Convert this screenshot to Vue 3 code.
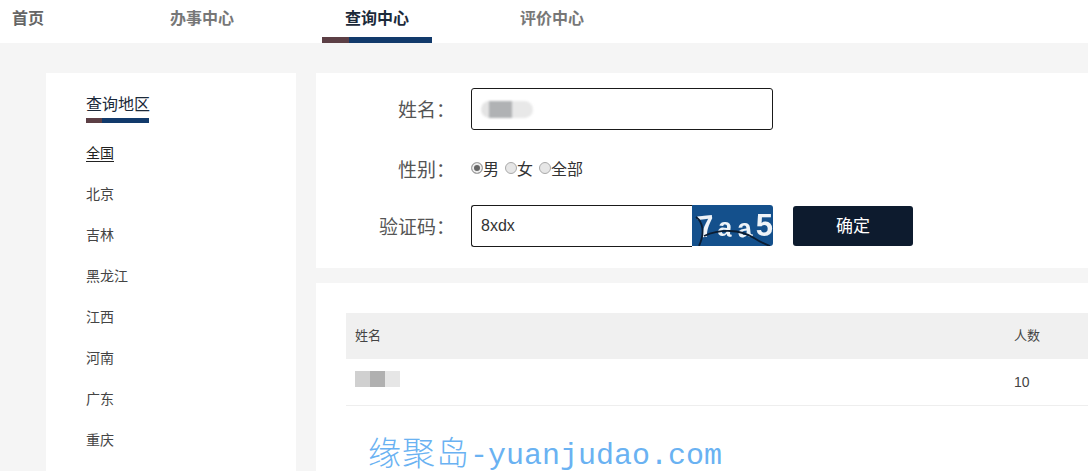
<script setup>
const navItems = ['办事中心', '查询中心', '评价中心']
const areas = ['全国', '北京', '吉林', '黑龙江', '江西', '河南', '广东', '重庆', '四川']
const genders = [
  { label: '男', checked: true },
  { label: '女', checked: false },
  { label: '全部', checked: false },
]
</script>

<template>
  <div class="page">
    <header class="nav">
      <a class="home">首页</a>
      <a v-for="item in navItems" :key="item" class="nav-item" :class="{ active: item === '查询中心' }">
        {{ item }}
        <span v-if="item === '查询中心'" class="bar"></span>
      </a>
    </header>

    <div class="content">
      <aside class="side">
        <div class="side-title">查询地区<span class="bar"></span></div>
        <ul class="areas">
          <li v-for="(area, i) in areas" :key="area"><span :class="{ current: i === 0 }">{{ area }}</span></li>
        </ul>
      </aside>

      <main class="main">
        <section class="form">
          <div class="row first">
            <label>姓名：</label>
            <div class="input name-input"><span class="blur-name"></span></div>
          </div>
          <div class="row second">
            <label>性别：</label>
            <div class="radios">
              <span v-for="g in genders" :key="g.label" class="radio-item">
                <i class="radio" :class="{ on: g.checked }"></i>{{ g.label }}
              </span>
            </div>
          </div>
          <div class="row third">
            <label>验证码：</label>
            <div class="captcha-wrap">
              <div class="input code-input">8xdx</div>
              <div class="captcha">
                <span class="cap-text"><b class="c1">7</b><b class="c2">a</b><b class="c3">a</b><b class="c4">5</b></span>
                <svg width="81" height="41" viewBox="0 0 81 41">
                  <path d="M4 12 C11 17 13 28 7 41 M12 31 C28 24 48 24 62 33 C68 37 73 39 78 41" fill="none" stroke="#0b1d33" stroke-width="1.8" />
                </svg>
              </div>
            </div>
            <button class="ok">确定</button>
          </div>
        </section>

        <section class="result">
          <div class="tr th"><span>姓名</span><span>人数</span></div>
          <div class="tr td"><span><i class="blur-cell"></i></span><span>10</span></div>
        </section>
      </main>
    </div>

    <div class="watermark"><span class="wm-cjk">缘聚岛</span>-yuanjudao.com</div>
  </div>
</template>

<style>
body {
  margin: 0;
}
</style>

<style scoped>
.page {
  position: relative;
  height: 471px;
  overflow: hidden;
  background: #f5f5f5;
  font-family: "Noto Sans CJK SC", "Liberation Sans", sans-serif;
  color: #333;
}
.nav {
  display: flex;
  height: 43px;
  background: #fff;
}
.home {
  width: 147px;
  padding-left: 12px;
  box-sizing: border-box;
  line-height: 35px;
  font-size: 16px;
  font-weight: 700;
  color: #666;
}
.nav-item {
  width: 110px;
  height: 37px;
  margin-right: 65px;
  text-align: center;
  line-height: 35px;
  font-size: 16px;
  font-weight: 700;
  color: #777;
}
.nav-item.active {
  color: #1c2a3a;
}
.bar {
  display: block;
  height: 6px;
  margin-top: 2px;
  background: linear-gradient(90deg, #5c3f45 25%, #123a6b 25%);
}
.content {
  display: flex;
  gap: 20px;
  padding: 30px 0 0 46px;
}
.side {
  flex: 0 0 250px;
  box-sizing: border-box;
  height: 420px;
  padding: 19px 0 0 40px;
  background: #fff;
}
.side-title {
  width: 63px;
  white-space: nowrap;
  font-size: 16px;
  line-height: 22px;
  color: #1c2a3a;
}
.side-title .bar {
  height: 5px;
  margin-top: 4px;
}
.areas {
  margin: 0;
  padding: 9px 0 0;
  list-style: none;
  font-size: 14px;
  color: #444;
}
.areas li {
  height: 41px;
  line-height: 41px;
}
.current {
  display: inline-block;
  line-height: 18px;
  color: #222;
  border-bottom: 1px solid #222;
}
.main {
  flex: 1;
  min-width: 0;
}
.form {
  box-sizing: border-box;
  height: 195px;
  padding-top: 15px;
  background: #fff;
}
.row {
  display: flex;
  align-items: center;
}
.row label {
  width: 139px;
  margin-right: 16px;
  padding-bottom: 2px;
  text-align: right;
  font-size: 19px;
  color: #555;
}
.first {
  height: 42px;
}
.second {
  height: 28px;
  margin-top: 25px;
}
.third {
  height: 42px;
  margin-top: 22px;
}
.input {
  box-sizing: border-box;
  height: 42px;
  border: 1px solid #1a1a1a;
  border-radius: 3px;
  background: #fff;
}
.name-input {
  display: flex;
  align-items: center;
  width: 302px;
  padding-left: 9px;
}
.blur-name {
  width: 52px;
  height: 17px;
  border-radius: 9px;
  background: linear-gradient(90deg, #e4e4e4 0 15%, #b0b2b4 15% 60%, #e8e8e8 60%);
  filter: blur(1px);
}
.radios {
  display: flex;
  gap: 6px;
  padding-bottom: 2px;
  font-size: 16px;
  color: #333;
}
.radio-item {
  display: flex;
  align-items: center;
}
.radio {
  box-sizing: border-box;
  width: 12px;
  height: 12px;
  border: 1px solid #aaa;
  border-radius: 50%;
  background: #e6e6e6;
}
.radio.on {
  background: #666;
  box-shadow: inset 0 0 0 2px #eee;
}
.captcha-wrap {
  display: flex;
  width: 302px;
}
.code-input {
  flex: 1;
  padding-left: 9px;
  line-height: 40px;
  font-size: 16px;
  font-family: "Liberation Sans", sans-serif;
  border-right: 0;
  border-radius: 3px 0 0 3px;
}
.captcha {
  position: relative;
  width: 81px;
  height: 41px;
  overflow: hidden;
  border-radius: 0 3px 3px 0;
  background: #14508c;
}
.cap-text {
  display: flex;
  align-items: center;
  justify-content: space-between;
  height: 41px;
  padding: 0 0 0 5px;
  color: #eef3f8;
  font: 700 26px/41px "Liberation Sans", sans-serif;
  filter: blur(0.5px);
}
.cap-text b {
  display: block;
}
.c1 {
  font-size: 31px;
  transform: rotate(-6deg) translateY(1px);
}
.c2 {
  transform: rotate(6deg) translateY(2px);
}
.c3 {
  transform: rotate(-6deg) translateY(3px);
}
.c4 {
  font-size: 31px;
}
.captcha svg {
  position: absolute;
  left: 0;
  top: 0;
}
.ok {
  width: 120px;
  height: 40px;
  margin-left: 20px;
  padding: 0 0 3px;
  border: 0;
  border-radius: 3px;
  background: #0d1b2e;
  color: #fff;
  font: 17px "Noto Sans CJK SC", sans-serif;
}
.result {
  height: 188px;
  margin-top: 15px;
  padding: 30px 0 0 30px;
  box-sizing: border-box;
  background: #fff;
}
.tr {
  display: grid;
  grid-template-columns: 659px 1fr;
  align-items: center;
  height: 46px;
  padding-left: 9px;
  color: #444;
}
.th {
  padding-bottom: 3px;
  box-sizing: border-box;
  background: #f0f0f0;
  font-size: 13px;
}
.td {
  box-sizing: content-box;
  border-bottom: 1px solid #eee;
  font-size: 14px;
  font-family: "Liberation Sans", sans-serif;
}
.blur-cell {
  display: block;
  width: 45px;
  height: 16px;
  margin-top: -6px;
  background: linear-gradient(90deg, #d0d0d0 0 33%, #b0b0b0 33% 66%, #e6e6e6 66%);
  filter: blur(0.6px);
}
.watermark {
  position: absolute;
  left: 368px;
  top: 431px;
  font: 30px/40px "Liberation Mono", monospace;
  color: #6ab2f2;
  white-space: nowrap;
}
.wm-cjk {
  font: 300 33px/40px "Noto Sans CJK SC", sans-serif;
  letter-spacing: 1px;
  vertical-align: -1px;
}
</style>
